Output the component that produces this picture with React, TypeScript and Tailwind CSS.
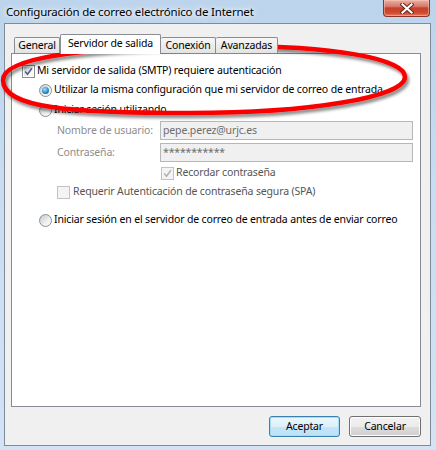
import React from "react";

function Checkbox({ checked = false, disabled = false }: { checked?: boolean; disabled?: boolean }) {
  return (
    <span
      className={
        disabled
          ? "relative flex h-[13px] w-[13px] shrink-0 items-center justify-center border border-[#c2c2c2] bg-[#f4f4f4]"
          : "relative flex h-[13px] w-[13px] shrink-0 items-center justify-center border border-[#8e8f8f] bg-white p-[1px]"
      }
    >
      {!disabled && <span className="h-full w-full bg-[linear-gradient(135deg,#cbd0d6,#f4f5f6_70%,#fdfdfd)]" />}
      {checked && (
        <svg className="absolute left-[1px] top-[1px]" width="9" height="9" viewBox="0 0 9 9">
          <path
            d="M1.2 4.4 L3.5 7.2 L7.9 1.2"
            fill="none"
            stroke={disabled ? "#b3b3b3" : "#4a5c8c"}
            strokeWidth="1.5"
          />
        </svg>
      )}
    </span>
  );
}

function Radio({ checked = false }: { checked?: boolean }) {
  return (
    <span className="flex h-[13px] w-[13px] shrink-0 items-center justify-center rounded-full border border-[#8e8f8f] bg-[linear-gradient(135deg,#c4c8ce,#eef0f2_60%,#ffffff)]">
      {checked && (
        <span className="h-[7px] w-[7px] rounded-full bg-[radial-gradient(circle_at_40%_35%,#a8e2ff,#2a88cc_55%,#0c4c83)]" />
      )}
    </span>
  );
}

function CloseButton() {
  return (
    <div className="flex h-[17px] w-[47px] items-center justify-center rounded-b-[4px] border border-t-0 border-[#8a3326] bg-[linear-gradient(#eab0a4,#d9786a_40%,#c5402a_50%,#cf4a30_80%,#e07a62)] shadow-[inset_0_0_0_1px_rgba(255,210,200,0.45)]">
      <svg width="14" height="11" viewBox="0 0 14 11">
        <path d="M2.5 1.5 L11.5 9.5 M11.5 1.5 L2.5 9.5" stroke="#5b2219" strokeWidth="4" strokeLinecap="square" />
        <path d="M2.5 1.5 L11.5 9.5 M11.5 1.5 L2.5 9.5" stroke="#ffffff" strokeWidth="2.2" strokeLinecap="square" />
      </svg>
    </div>
  );
}

export default function App() {
  return (
    <div className="relative h-[450px] w-[436px] overflow-hidden whitespace-nowrap bg-[linear-gradient(180deg,#bcd4ec,#c9dcf1_40%,#d3e3f5)] font-['Noto_Sans',sans-serif] text-black">
      <div className="flex h-[23px] items-start justify-between pl-[6px] pr-[6px]">
        <div className="text-[11.5px] leading-[23px] tracking-[-0.2px] text-black [text-shadow:0_0_8px_#ffffff,0_0_4px_#ffffff]">
          Configuración de correo electrónico de Internet
        </div>
        <CloseButton />
      </div>

      <div className="ml-[4px] flex h-[423px] w-[427px] flex-col border border-[#7e8b98] bg-[#f0f0f0] text-[10.5px] tracking-[-0.15px]">
        <div className="relative z-10 mt-[10px] flex h-[19px] items-end pl-[9px]">
          <div className="flex h-[16px] w-[46px] items-center justify-center rounded-t-[2px] border border-b-0 border-[#898c95] bg-[linear-gradient(#f7f7f7,#ececec_50%,#e3e3e3)]">
            General
          </div>
          <div className="-mb-px flex h-[20px] w-[101px] items-center justify-center rounded-t-[2px] border border-b-0 border-[#898c95] bg-white pb-[2px]">
            Servidor de salida
          </div>
          <div className="flex h-[16px] w-[55px] items-center justify-center rounded-t-[2px] border border-b-0 border-l-0 border-[#898c95] bg-[linear-gradient(#f7f7f7,#ececec_50%,#e3e3e3)]">
            Conexión
          </div>
          <div className="flex h-[16px] w-[62px] items-center justify-center rounded-t-[2px] border border-b-0 border-l-0 border-[#898c95] bg-[linear-gradient(#f7f7f7,#ececec_50%,#e3e3e3)]">
            Avanzadas
          </div>
        </div>

        <div className="ml-[6px] mr-[9px] h-[354px] border border-[#898c95] bg-white pt-[8px]">
          <div className="flex h-[18px] items-center gap-[2px] pl-[10px]">
            <Checkbox checked />
            <span>Mi servidor de salida (SMTP) requiere autenticación</span>
          </div>
          <div className="mt-[1px] flex h-[18px] items-center gap-[2px] pl-[27px]">
            <Radio checked />
            <span>Utilizar la misma configuración que mi servidor de correo de entrada</span>
          </div>
          <div className="mt-[2px] flex h-[18px] items-center gap-[2px] pl-[27px]">
            <Radio />
            <span>Iniciar sesión utilizando</span>
          </div>
          <div className="mt-[2px] flex h-[19px] items-center pl-[45px]">
            <span className="w-[103px] shrink-0 text-[#8d8d8d]">Nombre de usuario:</span>
            <div className="flex h-[19px] w-[253px] items-center border border-[#b4b7bb] bg-[#f0f0f0] px-[2px] text-[#6d6d6d]">
              pepe.perez@urjc.es
            </div>
          </div>
          <div className="mt-[3px] flex h-[19px] items-center pl-[45px]">
            <span className="w-[103px] shrink-0 text-[#8d8d8d]">Contraseña:</span>
            <div className="flex h-[19px] w-[253px] items-center border border-[#b4b7bb] bg-[#f0f0f0] px-[2px] text-[#6d6d6d]">
              ***********
            </div>
          </div>
          <div className="mt-[2px] flex h-[18px] items-center gap-[2px] pl-[149px] text-[#555555]">
            <Checkbox checked disabled />
            <span>Recordar contraseña</span>
          </div>
          <div className="mt-[1px] flex h-[18px] items-center gap-[3px] pl-[45px] text-[#555555]">
            <Checkbox disabled />
            <span>Requerir Autenticación de contraseña segura (SPA)</span>
          </div>
          <div className="mt-[10px] flex h-[18px] items-center gap-[2px] pl-[27px]">
            <Radio />
            <span>Iniciar sesión en el servidor de correo de entrada antes de enviar correo</span>
          </div>
        </div>

        <div className="mt-[9px] flex justify-end gap-[9px] pr-[9px]">
          <div className="flex h-[21px] w-[71px] items-center justify-center rounded-[3px] border border-[#3c7fb1] bg-[linear-gradient(#ecf7fd,#dcf0fb_50%,#c4e5f8_50%,#bde2f6)] shadow-[inset_0_0_0_1px_#a8dbf7]">
            Aceptar
          </div>
          <div className="flex h-[21px] w-[72px] items-center justify-center rounded-[3px] border border-[#707070] bg-[linear-gradient(#f2f2f2,#ebebeb_50%,#dddddd_50%,#cfcfcf)] shadow-[inset_0_0_0_1px_#fcfcfc]">
            Cancelar
          </div>
        </div>
      </div>

      <svg className="pointer-events-none absolute left-0 top-0" width="436" height="450">
        <defs>
          <filter id="sh" x="-10%" y="-40%" width="120%" height="180%">
            <feDropShadow dx="2" dy="3" stdDeviation="1.6" floodColor="#000000" floodOpacity="0.45" />
          </filter>
        </defs>
        <path
          d="M3,80 C3,58 80,46 230,46 C330,46 405,58 405,77 C405,97 310,113 190,113 C70,113 3,108 3,80 Z"
          fill="none"
          stroke="#f80000"
          strokeWidth="4.5"
          filter="url(#sh)"
        />
      </svg>
    </div>
  );
}
